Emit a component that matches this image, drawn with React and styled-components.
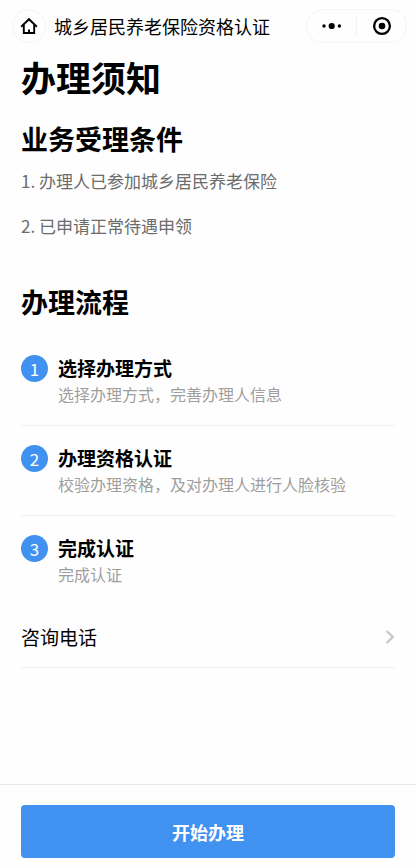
import React from 'react'
import styled, { createGlobalStyle } from 'styled-components';

const GlobalStyle = createGlobalStyle`
  * {
    box-sizing: border-box;
  }
  body {
    margin: 0;
    background: #fefefe;
    color: #000;
    font-family: 'Noto Sans CJK SC', 'Noto Sans', sans-serif;
  }
  button {
    padding: 0;
    border: 0;
    background: none;
    color: inherit;
    font-family: inherit;
    cursor: pointer;
  }
`

const Page = styled.div`
  display: flex;
  flex-direction: column;
  min-height: 100vh;
`

const NavBar = styled.header`
  display: flex;
  align-items: center;
  height: 52px;
  padding: 0 9px 0 12px;
`

const HomeButton = styled.button`
  display: flex;
  align-items: center;
  justify-content: center;
  width: 34px;
  height: 34px;
  border: 1px solid #f5f5f5;
  border-radius: 50%;
`

const NavTitle = styled.span`
  flex: 1;
  margin-left: 8px;
  font-size: 18px;
  line-height: 26px;
  white-space: nowrap;
`

const Capsule = styled.div`
  display: flex;
  align-items: center;
  width: 101px;
  height: 34px;
  border: 1px solid #f5f5f5;
  border-radius: 17px;
`

const CapsuleButton = styled.button`
  display: flex;
  flex: 1;
  align-items: center;
  justify-content: center;
  height: 20px;

  & + & {
    border-left: 1px solid #f3f3f3;
  }
`

const Content = styled.main`
  flex: 1;
  padding: 0 21px;
`

const H1 = styled.h1`
  margin: 0;
  font-size: 35px;
  line-height: 50px;
  font-weight: 700;
`

const H2 = styled.h2`
  margin: ${props => props.$margin ? props.$margin : '0'};
  font-size: 27px;
  line-height: 40px;
  font-weight: 700;
`

const Conditions = styled.ol`
  margin: 0;
  padding: 0;
  list-style: none;
`

const Condition = styled.li`
  color: #6c6c6c;
  font-size: 17px;
  line-height: 45px;
`

const Steps = styled.ol`
  margin: 0;
  padding: 0;
  list-style: none;
`

const StepItem = styled.li`
  display: flex;
  gap: 10px;
  padding: 18px 0 19px;
  border-bottom: 1px solid #f1f1f1;

  &:last-child {
    border-bottom-color: transparent;
  }
`

const StepNumber = styled.span`
  flex: none;
  width: 27px;
  height: 27px;
  margin-top: 1px;
  border-radius: 50%;
  background: #4191f1;
  color: #fff;
  font-size: 17px;
  line-height: 27px;
  text-align: center;
`

const StepTitle = styled.h3`
  margin: 0;
  font-size: 19px;
  line-height: 28px;
  font-weight: 700;
`

const StepText = styled.p`
  margin: 0;
  color: #9e9e9e;
  font-size: 16px;
  line-height: 24px;
`

const PhoneRow = styled.button`
  display: flex;
  align-items: center;
  justify-content: space-between;
  width: 100%;
  height: 62px;
  border-bottom: 1px solid #f1f1f1;
  font-size: 19px;
`

const Footer = styled.footer`
  padding: 20px 21px 8px;
  border-top: 1px solid #e8e8e8;
`

const StartButton = styled.button`
  display: block;
  width: 100%;
  height: 53px;
  border-radius: 4px;
  background: #4191f1;
  color: #fff;
  font-size: 18px;
  font-weight: 700;
`

const conditions = ['办理人已参加城乡居民养老保险', '已申请正常待遇申领']

const steps = [
  { title: '选择办理方式', text: '选择办理方式，完善办理人信息' },
  { title: '办理资格认证', text: '校验办理资格，及对办理人进行人脸核验' },
  { title: '完成认证', text: '完成认证' },
]

const HomeIcon = () => (
  <svg width="18" height="18" viewBox="0 0 18 18" fill="none" stroke="#000" strokeWidth="1.9">
    <path d="M1.2 9.8 9 2.2l7.8 7.6" />
    <path d="M3.8 8v8h10.4V8" />
    <path d="M9 12.4V16" />
  </svg>
)

const MoreIcon = () => (
  <svg width="20" height="8" viewBox="0 0 20 8" fill="#000">
    <circle cx="2" cy="4" r="1.7" />
    <circle cx="9.7" cy="4" r="3.1" />
    <circle cx="17.4" cy="4" r="1.7" />
  </svg>
)

const CloseIcon = () => (
  <svg width="20" height="20" viewBox="0 0 20 20">
    <circle cx="10" cy="10" r="7.9" fill="none" stroke="#000" strokeWidth="2.3" />
    <circle cx="10" cy="10" r="3.3" fill="#000" />
  </svg>
)

const ChevronIcon = () => (
  <svg width="10" height="16" viewBox="0 0 10 16" fill="none" stroke="#c8c8c8" strokeWidth="2.4">
    <path d="M1.5 2 7.8 8l-6.3 6" />
  </svg>
)

const App = () => {
  return (
    <Page>
      <GlobalStyle />
      <NavBar>
        <HomeButton type="button" aria-label="首页"><HomeIcon /></HomeButton>
        <NavTitle>城乡居民养老保险资格认证</NavTitle>
        <Capsule>
          <CapsuleButton type="button" aria-label="更多"><MoreIcon /></CapsuleButton>
          <CapsuleButton type="button" aria-label="关闭"><CloseIcon /></CapsuleButton>
        </Capsule>
      </NavBar>
      <Content>
        <H1>办理须知</H1>
        <H2 $margin="17px 0 -1px">业务受理条件</H2>
        <Conditions>
          {conditions.map((text, i) => (
            <Condition key={text}>{i + 1}. {text}</Condition>
          ))}
        </Conditions>
        <H2 $margin="34px 0 14px">办理流程</H2>
        <Steps>
          {steps.map((step, i) => (
            <StepItem key={step.title}>
              <StepNumber>{i + 1}</StepNumber>
              <div>
                <StepTitle>{step.title}</StepTitle>
                <StepText>{step.text}</StepText>
              </div>
            </StepItem>
          ))}
        </Steps>
        <PhoneRow type="button">
          <span>咨询电话</span>
          <ChevronIcon />
        </PhoneRow>
      </Content>
      <Footer>
        <StartButton type="button">开始办理</StartButton>
      </Footer>
    </Page>
  )
}

export default App
